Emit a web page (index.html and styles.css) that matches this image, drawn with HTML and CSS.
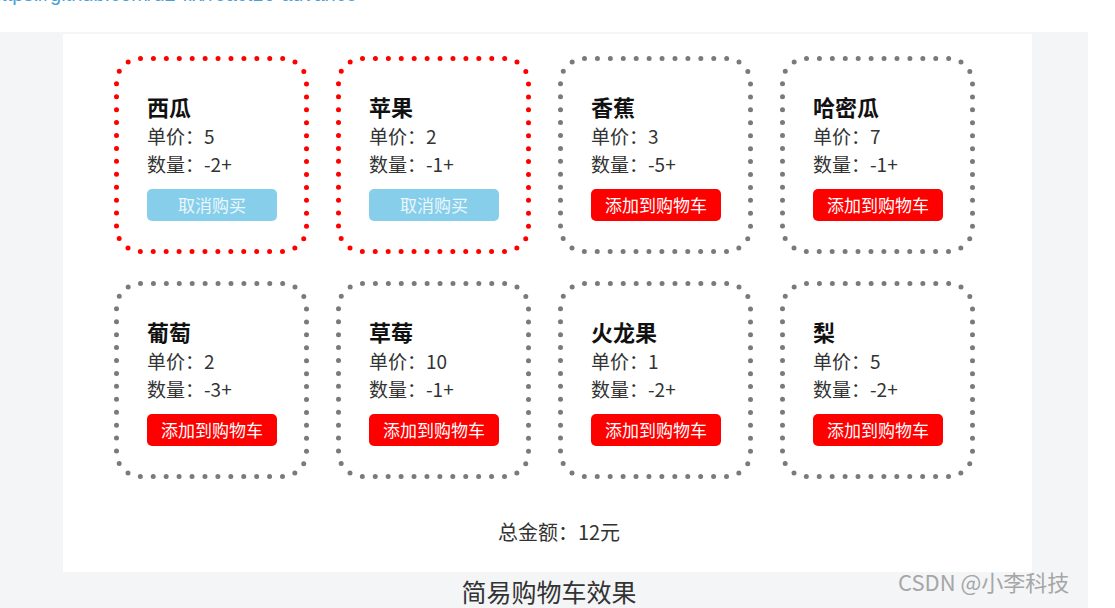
FILE: index.html
```html
<!DOCTYPE html>
<html lang="zh-CN">
<head>
    <meta charset="UTF-8">
    <title>简易购物车效果</title>
    <link rel="stylesheet" href="styles.css">
</head>
<body>
    <div class="src-link">https://github.com/d2-fix/react16-advance</div>
    <div class="figure">
        <div class="shot">
            <div class="goods" id="goods"></div>
            <div class="total">总金额：12元</div>
        </div>
        <div class="caption">
            <span>简易购物车效果</span>
            <span class="mark">CSDN @小李科技</span>
        </div>
    </div>
    <script>
        let goods = [
            { name: "西瓜", price: 5, num: 2, picked: true },
            { name: "苹果", price: 2, num: 1, picked: true },
            { name: "香蕉", price: 3, num: 5, picked: false },
            { name: "哈密瓜", price: 7, num: 1, picked: false },
            { name: "葡萄", price: 2, num: 3, picked: false },
            { name: "草莓", price: 10, num: 1, picked: false },
            { name: "火龙果", price: 1, num: 2, picked: false },
            { name: "梨", price: 5, num: 2, picked: false }
        ];

        function renderGoods() {
            let box = document.getElementById("goods");
            goods.forEach((item) => {
                let div = document.createElement("div");
                div.className = item.picked ? "card picked" : "card";
                div.innerHTML = `<svg class="dots" viewBox="0 0 195 198"><rect x="2.5" y="2.5" width="190" height="193" rx="24" pathLength="56"/></svg>
                    <div class="name">${item.name}</div>
                    <div class="row">单价：${item.price}</div>
                    <div class="row">数量：-${item.num}+</div>
                    <button class="btn ${item.picked ? "cancel" : "add"}">${item.picked ? "取消购买" : "添加到购物车"}</button>`;
                box.appendChild(div);
            });
        }

        renderGoods();
    </script>
</body>
</html>
```

FILE: styles.css
```css
body {
    margin: 0;
    padding: 0;
    background: #fff;
    font-family: "Noto Sans CJK SC", "Noto Sans", sans-serif;
    color: #333;
    overflow: hidden;
}
.src-link {
    font-family: "Liberation Sans", Arial, sans-serif;
    font-size: 20px;
    line-height: 20px;
    color: #4a9fd8;
    margin-top: -16px;
    margin-left: -10px;
    height: 20px;
    white-space: nowrap;
}
.figure {
    margin-top: 28px;
    width: 1088px;
    height: 600px;
    background: #f4f5f7;
    padding-top: 2px;
    box-sizing: border-box;
}
.shot {
    margin-left: 63px;
    width: 969px;
    height: 538px;
    background: #fff;
    padding: 22px 0 0 51px;
    box-sizing: border-box;
}
.goods {
    display: grid;
    grid-template-columns: repeat(4, 195px);
    column-gap: 27px;
    row-gap: 27px;
}
.card {
    position: relative;
    box-sizing: border-box;
    height: 198px;
    padding: 34px 0 0 33px;
}
.dots {
    position: absolute;
    left: 0;
    top: 0;
    width: 195px;
    height: 198px;
}
.dots rect {
    fill: none;
    stroke: #7a7a7a;
    stroke-width: 5;
    stroke-linecap: round;
    stroke-dasharray: 0 1;
}
.card.picked .dots rect {
    stroke: #ff0000;
}
.name {
    font-size: 22px;
    font-weight: bold;
    color: #111;
    line-height: 32px;
}
.row {
    font-size: 19px;
    line-height: 28px;
    color: #333;
}
.btn {
    display: block;
    margin-top: 11px;
    width: 130px;
    height: 32px;
    border: none;
    border-radius: 5px;
    color: #fff;
    font-family: inherit;
    font-size: 17px;
    line-height: 32px;
    padding: 0;
}
.btn.add {
    background: #ff0000;
}
.btn.cancel {
    background: #87ceeb;
    color: #eaf7fc;
}
.total {
    margin-top: 38px;
    width: 890px;
    text-align: center;
    font-size: 20px;
    color: #333;
}
.caption {
    display: flex;
    align-items: center;
    justify-content: center;
    height: 38px;
    padding-left: 10px;
    font-size: 25px;
    color: #333;
    position: relative;
}
.caption .mark {
    position: absolute;
    left: 898px;
    top: -7px;
    color: #a6a6a6;
    font-size: 22px;
}
```
